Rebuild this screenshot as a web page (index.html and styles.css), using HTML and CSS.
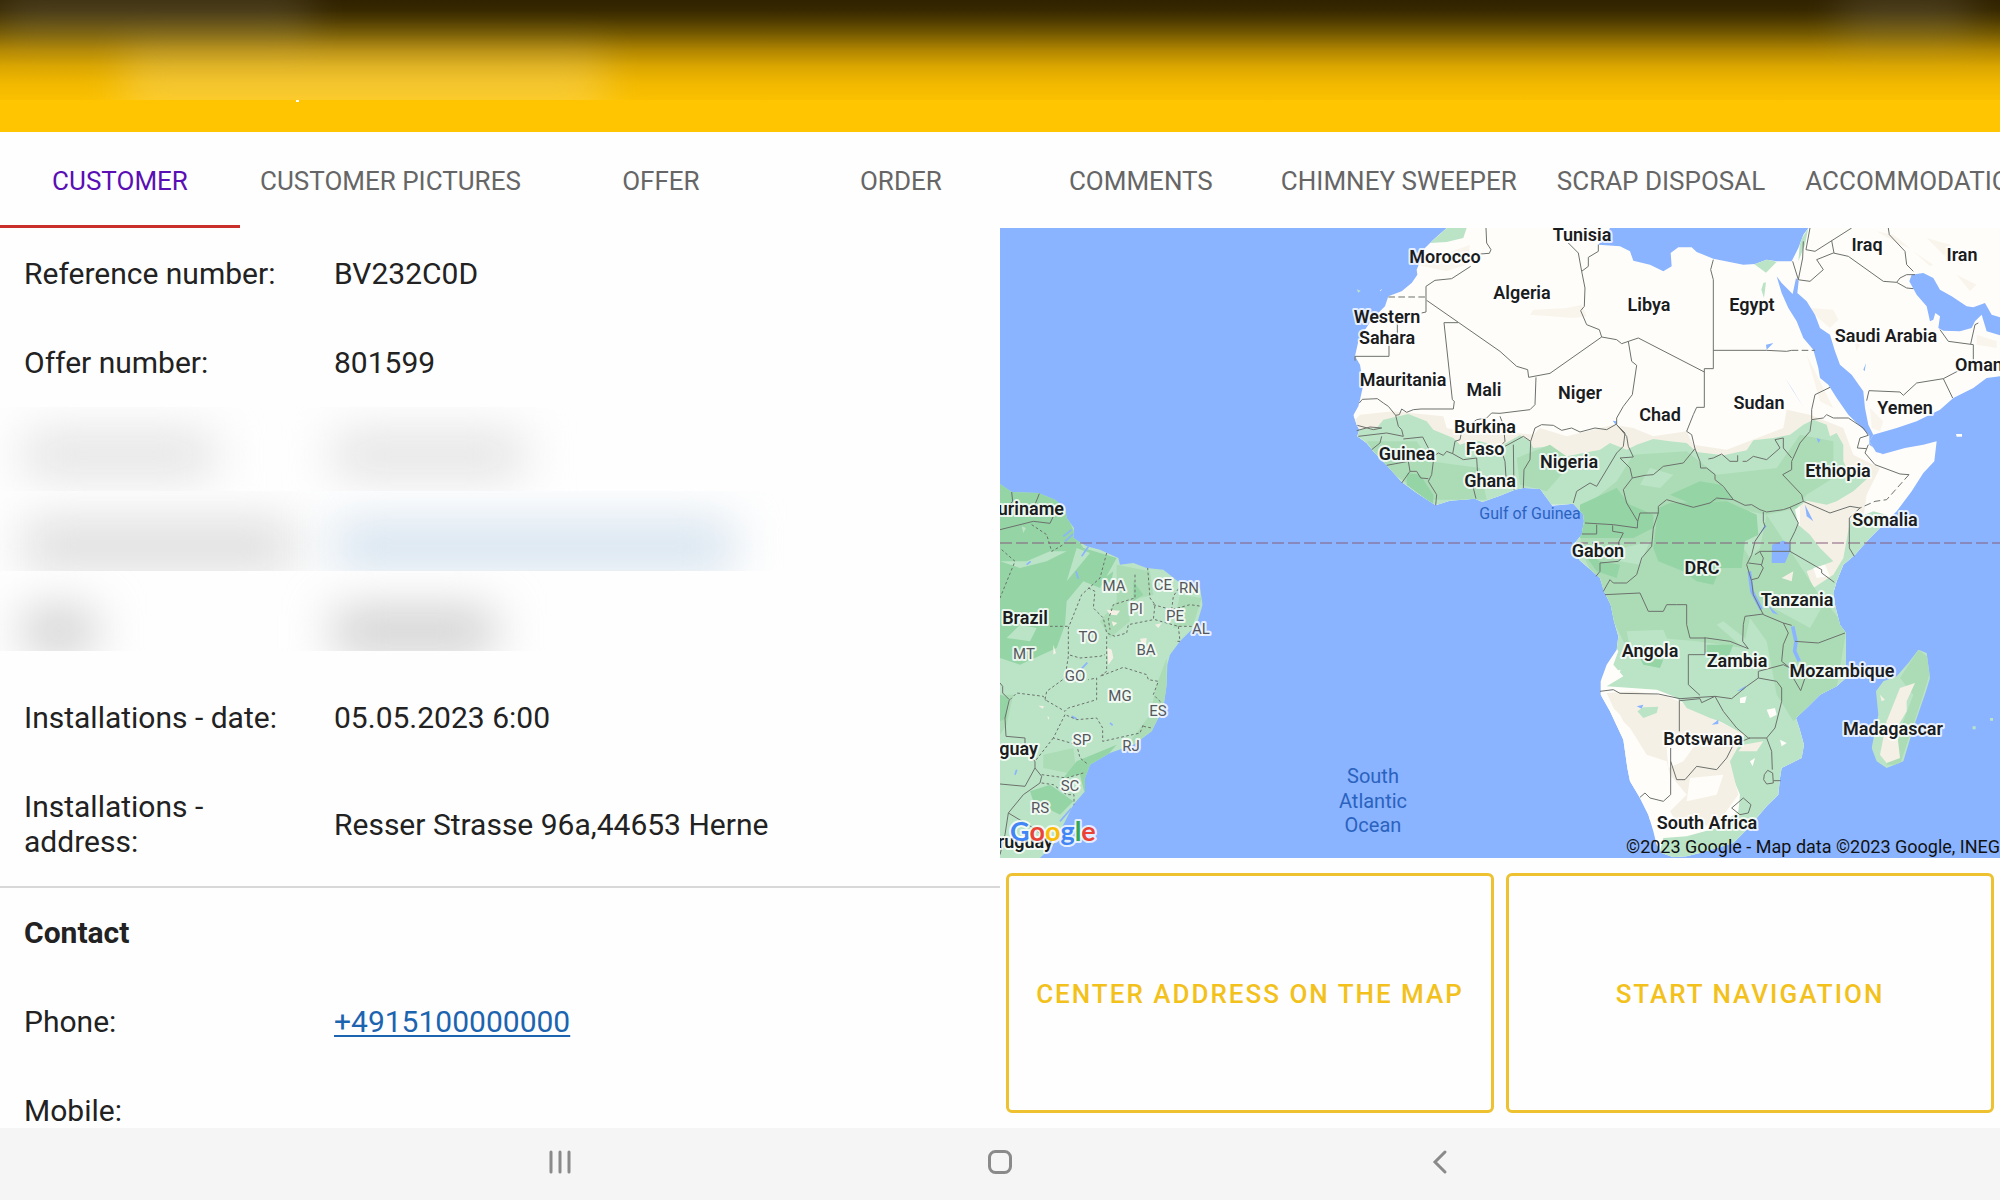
FILE: index.html
```html
<!DOCTYPE html>
<html lang="en">
<head>
<meta charset="utf-8">
<meta name="viewport" content="width=device-width, initial-scale=1">
<title>Customer</title>
<link rel="stylesheet" href="styles.css">
</head>
<body>
<header class="topbar">
  <div class="topbar-shade">
    <span class="glow glow-status"></span>
    <span class="glow glow-title"></span>
    <span class="glow glow-battery"></span>
  </div>
  <span class="title-tail"></span>
</header>

<nav class="tabs" role="tablist">
  <button class="tab tab-active" role="tab" aria-selected="true">CUSTOMER</button>
  <button class="tab" role="tab">CUSTOMER PICTURES</button>
  <button class="tab" role="tab">OFFER</button>
  <button class="tab" role="tab">ORDER</button>
  <button class="tab" role="tab">COMMENTS</button>
  <button class="tab" role="tab">CHIMNEY SWEEPER</button>
  <button class="tab" role="tab">SCRAP DISPOSAL</button>
  <button class="tab" role="tab">ACCOMMODATION</button>
</nav>

<main class="content">
  <section class="details">
    <dl class="rows">
      <div class="row"><dt>Reference number:</dt><dd>BV232C0D</dd></div>
      <div class="row"><dt>Offer number:</dt><dd>801599</dd></div>
    </dl>
    <div class="hidden-rows" aria-hidden="true">
      <div class="hidden-row hidden-name"><span class="smudge"></span><span class="smudge"></span></div>
      <div class="hidden-row hidden-mail"><span class="smudge"></span><span class="smudge smudge-link"></span></div>
      <div class="hidden-row hidden-type"><span class="smudge"></span><span class="smudge"></span></div>
    </div>
    <dl class="rows">
      <div class="row"><dt>Installations - date:</dt><dd>05.05.2023 6:00</dd></div>
      <div class="row"><dt>Installations - address:</dt><dd>Resser Strasse 96a,44653 Herne</dd></div>
    </dl>
    <h2 class="section-title">Contact</h2>
    <dl class="rows">
      <div class="row"><dt>Phone:</dt><dd><a class="phone" href="tel:+4915100000000">+4915100000000</a></dd></div>
      <div class="row"><dt>Mobile:</dt><dd></dd></div>
    </dl>
  </section>

  <section class="side">
    <svg class="map" viewBox="0 0 1000 630" preserveAspectRatio="xMidYMid slice" role="img" aria-label="Map">
      <defs>
        <clipPath id="land"><path d="M1340 0 1300 35 1275 60 1262 95 1250 125 1252 140 1235 165 1205 190 1165 205 1155 235 1115 275 1095 305 1075 340 1065 385 1080 410 1085 440 1090 470 1080 515 1075 535 1060 562 1070 590 1078 605 1072 625 1100 645 1120 670 1160 712 1205 762 1250 795 1307 832 1350 818 1425 812 1447 822 1500 803 1545 785 1570 780 1620 782 1640 810 1657 833 1720 827 1750 860 1752 880 1745 920 1720 950 1738 996 1800 1050 1812 1090 1832 1130 1842 1180 1855 1225 1850 1265 1820 1310 1802 1360 1802 1400 1830 1450 1870 1535 1882 1620 1890 1660 1920 1710 1945 1760 1960 1810 1970 1850 1985 1875 2020 1888 2060 1885 2100 1875 2200 1845 2245 1800 2300 1735 2335 1700 2340 1650 2345 1620 2405 1590 2412 1550 2398 1500 2388 1470 2420 1440 2460 1400 2510 1375 2538 1350 2538 1215 2520 1190 2505 1130 2500 1095 2510 1060 2530 1010 2565 980 2605 935 2640 900 2690 850 2735 790 2770 735 2803 700 2810 640 2770 650 2715 660 2650 678 2628 672 2608 640 2620 620 2690 600 2750 580 2820 545 2860 510 2920 480 2960 450 3000 445V0H2425L2410 20 2395 60 2375 100 2330 100 2300 95 2265 108 2230 110 2140 92 2090 72 2075 58 2035 58 2012 75 2015 115 1990 130 1950 110 1900 98 1890 70 1860 55 1795 50 1815 25 1830 0Z"/></clipPath>
        <clipPath id="america"><path d="M0 768 35 792 115 795 165 815 195 840 200 870 222 900 220 930 260 955 300 965 355 990 360 1010 400 1005 440 1020 490 1025 540 1065 600 1080 608 1130 590 1190 540 1240 510 1280 502 1310 500 1370 490 1440 455 1510 400 1550 330 1575 270 1610 255 1650 255 1690 220 1730 190 1790 160 1850 120 1890H0Z"/></clipPath>
        <clipPath id="madagascar"><path d="M2755 1265 2780 1275 2790 1350 2778 1390 2740 1500 2710 1600 2660 1620 2630 1600 2615 1560 2635 1460 2628 1390 2650 1360 2690 1345 2725 1305Z"/></clipPath>
      </defs>
      <rect class="sea" width="1000" height="630"/>
      <g transform="scale(.33333)">
        <g clip-path="url(#land)">
          <rect class="sand" x="1000" width="2000" height="1890"/>
          <path class="cream" d="M1050 590 1080 560 1180 550 1330 565 1340 600 1430 620 1500 610 1600 620 1620 600 1700 625 1840 590 1900 600 1960 625 2060 610 2080 650 2180 665 2350 600 2360 545 2430 560 2530 600 2560 680 2640 720 2600 800 2560 1080 2400 1100V760L1700 720 1100 680Z"/>
          <path class="cream soft" d="M1700 240 1745 230 1760 265 1720 270 1590 260 1600 245ZM2430 240 2500 245 2515 275 2490 300 2455 270ZM1250 110 1330 80 1410 50 1400 110 1340 130ZM2630 10 2680 20 2730 60 2700 50ZM2740 70 2800 110 2790 115ZM2780 30 2850 50 2890 110 2830 80ZM2870 140 2930 170 2910 190ZM2610 540 2650 580 2640 610 2615 600ZM2930 320 2990 340 2990 360 2930 350ZM2420 380 2450 440 2500 540 2460 520ZM2560 330 2580 350 2570 370Z"/>
          <path class="green" d="M1290 45 1340 0H1400L1390 30 1340 42ZM2262 108 2300 92 2330 102 2298 134ZM2290 165 2298 163 2292 210 2284 185ZM2395 100 2400 40 2425 0 2415 50Z"/>
          <path class="green" d="M1050 605 1130 600 1150 575 1225 558 1280 580 1300 605 1360 630 1380 650 1420 635 1500 655 1560 622 1590 640 1600 660 1650 655 1700 685 1800 665 1830 645 1880 665 1910 650 1960 633 2010 640 2060 645 2090 672 2170 682 2240 667 2260 637 2320 630 2370 620 2410 590 2440 575 2480 590 2490 625 2510 615 2530 650 2530 700 2545 730 2610 745 2560 790 2510 820 2480 830 2420 818 2385 845 2395 890 2430 920 2460 960 2500 1000 2420 1030 2440 1080 2500 1040 2530 990 2550 880 2620 850 2660 860 2700 1000 2700 1890H1975L1990 1830 2060 1825 2150 1800 2215 1750 2220 1700 2195 1640 2160 1610 2230 1520 2160 1480 2110 1450 2060 1430 2020 1405 1970 1385 1820 1375 1870 1345 1840 1310 1855 1270 1700 1000V830H1300L1050 660Z"/>
          <path class="cream" d="M1820 1395 1900 1390 2000 1405 2060 1430 2150 1475 2235 1520 2190 1600 2215 1700 2150 1790 2040 1800 2010 1750 2060 1700 2010 1640 2000 1600 1940 1580 1890 1500 1850 1460Z"/>
          <path class="green" d="M1912 1450 1930 1438 1975 1436 1970 1455 1930 1470ZM2045 1418 2110 1425 2170 1455 2190 1490 2130 1470 2060 1440Z"/>
          <path class="mid" d="M1100 640 1250 640 1290 700 1440 720 1460 815H1300L1150 720ZM1550 690 1650 650 1720 700 1640 790 1560 770ZM1900 680 2060 670 2150 740 2330 720 2400 620 2500 640 2500 750 2420 800 2390 840 2300 860 2450 1090 2540 1200 2510 1380 2380 1480 2330 1400 2300 1240 2250 1170 2230 1260 2090 1240 1980 1230 1890 1280 1850 1200 1740 960 1750 840 1850 760Z"/>
          <path class="light" d="M1950 720 2020 740 1980 780 1920 770ZM2140 830 2300 860 2280 960 2250 990 2180 880ZM2400 1100 2470 1130 2430 1200 2320 1140ZM1880 1210 1990 1205 2030 1300 1900 1310ZM2170 1180 2260 1250 2230 1260 2150 1190ZM1870 960 1950 940 1920 1010 1860 1000Z"/>
          <path class="dark" d="M1740 830 1850 780 1890 830 1960 860 1960 900 1900 930 1740 930ZM1975 840 2010 825 2180 820 2270 860 2275 920 2235 940 2225 1020 2160 1020 2140 1070 2090 1060 2050 1030 1975 1000 1960 960ZM1220 735 1260 740 1300 800 1300 830 1220 770ZM1740 960 1800 1000 1860 1010 1850 1050 1790 1030ZM2120 1250 2200 1250 2180 1300 2120 1290ZM1920 1290 1990 1295 1980 1320 1930 1310ZM2100 760 2160 770 2200 810 2080 830 2010 800Z"/>
          <path class="sand" d="M2100 1530 2050 1600 2005 1620 2000 1560 2040 1540ZM2070 1650 2170 1640 2150 1700 2060 1720ZM2300 1445 2325 1440 2330 1460 2310 1470ZM2220 1410 2240 1405 2235 1425 2220 1425ZM2440 1020 2475 1010 2490 1045 2450 1050ZM1845 1330 1862 1325 1855 1345ZM2250 1600 2265 1590 2258 1615ZM2340 1535 2360 1545 2345 1555ZM1800 1400 1860 1460 1900 1540 1980 1640 1990 1740 1950 1780 1850 1600Z"/>
          <path class="cream" d="M2345 1050 2380 1030 2375 1060ZM2230 1550 2290 1540 2270 1570 2215 1570Z"/>
          <path class="sea" d="M2330 145 2345 165 2378 198 2388 150 2396 160 2392 195 2420 220 2445 260 2460 300 2490 320 2505 370 2520 410 2555 440 2590 490 2595 540 2605 590 2620 620 2650 680 2608 650 2608 622 2580 595 2545 560 2510 510 2485 470 2460 450 2455 420 2440 365 2410 330 2390 280 2365 240 2345 195ZM2735 140 2770 135 2800 150 2820 185 2855 205 2900 235 2920 238 2955 225 2975 260 3000 268V322L2960 310 2945 260 2925 280 2915 300 2880 310 2830 308 2815 300 2820 265 2806 255 2800 275 2790 280 2780 235 2750 200 2728 160Z"/>
          <path class="sea" d="M2315 1005 2316 950 2350 938 2368 945 2370 970 2355 1005ZM2415 830 2440 880 2420 865ZM2295 890 2300 895 2275 925ZM2298 350 2320 345 2300 365ZM2355 450 2412 540 2375 480ZM1910 1435 1930 1430 1925 1442ZM2135 1490 2155 1475 2155 1488ZM2210 1390 2240 1372 2230 1385ZM1838 578 1850 580 1848 592ZM2590 425 2598 405 2594 430ZM2450 630 2462 635 2455 645ZM2303 1130 2335 1160 2318 1155Z"/>
          <path class="lake" d="M2248 1030 2256 1090 2284 1145M2378 1195 2388 1240 2384 1270 2398 1300"/>
        </g>
        <path class="sand" d="M1140 188 1146 182 1142 190ZM2868 618H2886V626H2870Z"/>
        <path class="green" d="M1070 184 1082 188 1075 194ZM2918 1495H2927V1504H2918ZM2970 1470H2979V1478H2970Z"/>

        <g clip-path="url(#madagascar)">
          <rect class="green" x="2600" y="1250" width="200" height="400"/>
          <path class="mid" d="M2755 1265 2800 1300 2770 1400 2700 1610 2660 1610 2740 1400 2700 1350Z"/>
          <path class="cream" d="M2745 1365 2720 1420 2720 1450 2690 1500 2700 1590 2660 1605 2640 1580 2660 1480 2700 1380ZM2640 1400 2655 1415 2645 1420Z"/>
        </g>

        <g clip-path="url(#america)">
          <rect class="green" y="760" width="620" height="1140"/>
          <path class="dark" d="M0 760H160L230 930 250 960 350 990 300 1080 250 1060 200 1120 195 1190 170 1260 60 1310 0 1290Z"/>
          <path class="light" d="M60 1190 110 1200 90 1240 20 1230ZM0 1000 80 1000 150 970 200 970 140 1000 60 1020ZM65 895 78 900 70 915ZM230 960 270 975 200 1060Z"/>
          <path class="mid" d="M350 1010 450 1030 460 1100 380 1120 390 1180 330 1230 300 1180 350 1120ZM500 1290 500 1400 460 1520 420 1560 390 1540 450 1460 470 1370ZM130 1580 220 1560 230 1640 130 1620ZM0 1400 40 1400 20 1490 0 1520ZM540 1100 605 1110 580 1190 520 1200Z"/>
          <path class="dark" d="M230 1600 350 1550 270 1640 255 1700 240 1640 190 1650ZM90 1690 150 1670 220 1720 180 1760 100 1720ZM0 1400 25 1410 20 1470 0 1480ZM300 1060 340 1030 330 1080ZM400 1060 430 1100 400 1120Z"/>
          <path class="cream" d="M320 1145 360 1148 350 1162 330 1160ZM335 1180 352 1185 340 1195ZM465 1190 485 1185 475 1200ZM322 1260 335 1265 340 1290 325 1310ZM420 1232 440 1230 438 1250 425 1248ZM115 1433 132 1434 128 1442ZM160 1250 168 1275 160 1280ZM142 1465 148 1468 145 1476Z"/>
          <path class="water" d="M190 925 215 905M195 940 220 918M245 985 268 952M245 1322 262 1304M215 1465 230 1472M330 1485 338 1492M80 1010 92 1000M180 1780 215 1740M228 1030 235 1052M45 1640 50 1625"/>
        </g>

        <path class="border" d="M1458 0 1460 45 1473 65 1468 76 1440 78M1412 115 1355 152 1305 157 1278 175V252L1265 255M1280 217 1375 283 1500 370 1550 415 1583 425 1586 448 1650 436 1805 327 1850 335 1865 347 1915 330 2113 432M1375 284H1332L1357 515 1363 520 1360 543H1263L1240 545 1220 553 1205 543 1198 560 1187 562 1165 535 1150 525 1132 512 1087 514 1078 525M1065 398V385H1167V320H1192V285M1187 562 1195 595 1205 605 1210 625 1160 615 1075 625M1070 608 1110 597 1145 600 1120 605 1072 592M1210 633 1268 627 1285 660 1300 700 1295 740 1285 760 1310 800 1307 832M1145 625 1140 645 1115 665M1160 712 1225 700 1230 730 1205 765M1230 730H1250L1262 750 1285 752M1300 685 1315 675 1330 682 1340 670 1358 677 1365 640 1380 635 1385 610 1430 575 1460 570 1475 555 1500 556 1590 545 1605 530 1608 448M1358 677 1390 695 1430 690 1433 740 1420 780 1428 812M1500 565 1510 590 1515 640 1500 655 1515 700 1520 780M1515 655 1570 625 1592 640M1540 650 1542 785M1570 780 1572 725 1590 695 1592 640 1605 600 1625 590 1660 592 1685 607 1715 600 1740 612 1785 600 1820 605 1850 588M1885 340 1895 400 1910 412 1897 500 1870 535 1850 570V590L1875 615 1870 655 1850 675 1790 775 1770 765 1730 790 1720 825M1850 590 1880 625 1885 655 1900 687 1860 690 1890 720 1897 750 1870 785 1880 825 1913 880 1912 900 1840 890 1755 885M1897 750 1935 742 1960 740 1990 715 2050 705 2085 662M1913 880 1920 855 1975 855V835L2000 815 2080 838 2130 825 2150 810 2200 815 2185 795 2170 775 2145 755V740L2120 720H2102L2100 700 2085 662 2075 620 2060 610 2080 560 2090 538H2113V422H2140V155L2132 125 2140 95M2140 367H2300L2360 370 2375 367M1705 45 1735 75 1745 130 1755 180 1753 235 1742 248 1760 290 1798 305 1805 327M1745 130 1765 115V88L1795 70V50M2125 693 2140 690 2165 678 2190 700H2213V682M2228 700 2240 700 2260 685 2300 695 2340 660 2325 635 2350 630V660L2375 690M2490 478 2445 500 2435 545V575L2430 610 2400 645 2375 700V725L2348 740 2405 800 2410 820 2370 838 2350 845 2300 852 2280 845 2255 830 2235 832 2200 815M2435 575 2470 570 2480 560 2500 570 2545 570 2590 600 2605 622 2580 630 2572 660 2600 662M2605 650 2595 675 2625 710 2700 738 2727 740M2410 820 2490 855 2550 835 2580 840 2548 870V960L2563 985M2370 838 2395 885 2385 910 2370 940V970H2280L2265 980M2370 970 2465 1025V1035L2503 1063M2290 852V880L2295 895 2265 940 2255 980 2240 1010 2255 1060 2260 1100 2290 1160 2350 1185 2375 1192M2245 1005 2285 1010 2290 990 2280 972M2255 1055 2275 1050 2290 1020 2283 1010M2290 1158 2235 1165 2230 1190 2228 1240 2245 1262 2190 1240 2120 1230 2070 1230 2060 1190V1130H2030L2000 1130 1990 1150 1945 1150 1920 1095 1815 1100M2115 1228V1280H2065V1370L2100 1402M1800 1390 1840 1385 1860 1396 1975 1398 2040 1412 2145 1405 2195 1412 2240 1375 2275 1350 2330 1360 2345 1380V1420L2325 1500 2300 1530 2245 1530 2210 1500 2170 1450 2145 1405M2038 1415V1510M2040 1418 2100 1412 2105 1424 2145 1405M2275 1350V1330L2350 1310 2370 1320M2350 1185 2365 1215 2350 1250 2345 1300 2370 1320M2380 1350 2402 1388 2415 1350M2385 1240 2455 1245 2535 1215M2012 1560V1700L1990 1720 1950 1710 1935 1695 1920 1708M2012 1600 2030 1655H2055L2090 1615 2150 1625 2180 1590 2200 1550 2250 1530M2300 1530 2315 1570 2317 1625M2293 1640 2303 1627 2318 1635 2320 1665 2300 1668 2291 1655ZM2320 1658H2342M2195 1740 2230 1710 2253 1730 2245 1755 2220 1760ZM1745 918H1790V890M1838 892V910L1870 915 1855 945 1870 985 1855 1000 1800 1005V1030L1788 1045M1975 855 1960 900 1955 955 1925 990 1910 1040 1880 1065 1840 1065 1830 1055 1810 1090M2393 155 2430 160 2470 125 2450 95 2500 75 2545 85 2650 160 2690 163 2700 150 2720 140H2745M2430 0 2418 65 2445 70 2555 0M2495 38 2502 75M2410 40 2408 90 2395 155 2378 100M2665 0 2668 20 2715 70 2720 110 2740 130M2690 163 2720 180 2740 182M2600 518 2607 488 2700 492 2710 502 2750 465 2830 452 2858 510M2830 452 2920 405V350L2845 340 2820 305M2912 348 2925 290 2935 285"/>
        <path class="border" d="M35 792 38 820 20 840M118 797 105 830 110 850M0 905 100 880 150 886 160 865M0 1365 8 1375V1395L28 1415 15 1470 18 1525 75 1530V1570L105 1600V1620L75 1675 0 1668M105 1620 125 1645 120 1665 70 1700 25 1755 15 1820 0 1880M25 1755 100 1800 160 1850"/>
        <path class="border dashed" d="M1165 207H1278M2375 367H2445M2727 740 2660 815 2625 820 2580 840"/>
        <path class="border state" d="M5 965 45 1000 0 1110M95 890 140 920 155 970 190 950M320 975 300 1050 245 1100 205 1200 205 1280 240 1290 300 1285 315 1280M150 1195H205M205 1285 195 1350 140 1390 135 1415 195 1450 205 1440 290 1415V1350L265 1355M265 1080 285 1090 280 1140 310 1170 320 1215 345 1225 380 1215 385 1190 460 1175 465 1130 450 1110 443 1020M405 1040 405 1110 340 1130 325 1175 330 1205M460 1130 515 1145 570 1130 605 1135M515 1145 520 1105 540 1075M465 1175 535 1195 580 1195M535 1195 540 1240 525 1240M320 1225 320 1330 300 1345 370 1318 440 1340 445 1355 475 1360 460 1400 490 1430M430 1495 455 1500M195 1460 160 1530 230 1550 240 1590 265 1610M160 1530 105 1600M200 1462 230 1475 290 1470 308 1500V1540L420 1515 430 1490M30 1415 50 1395 130 1405 138 1418M125 1640 200 1650 250 1635M125 1665 160 1670 200 1700 222 1700V1730"/>
      </g>
      <path class="equator" d="M0 315H1000"/>

      <g class="country">
        <text x="445" y="35">Morocco</text><text x="387" y="95">Western</text><text x="387" y="116">Sahara</text>
        <text x="403" y="158">Mauritania</text><text x="484" y="168">Mali</text><text x="485" y="205">Burkina</text><text x="485" y="227">Faso</text>
        <text x="407" y="232">Guinea</text><text x="490" y="259">Ghana</text><text x="522" y="71">Algeria</text><text x="582" y="13">Tunisia</text>
        <text x="649" y="83">Libya</text><text x="752" y="83">Egypt</text><text x="867" y="23">Iraq</text><text x="962" y="33">Iran</text>
        <text x="886" y="114">Saudi Arabia</text><text x="979" y="143">Oman</text><text x="580" y="171">Niger</text><text x="660" y="193">Chad</text>
        <text x="759" y="181">Sudan</text><text x="905" y="186">Yemen</text><text x="569" y="240">Nigeria</text><text x="838" y="249">Ethiopia</text>
        <text x="885" y="298">Somalia</text><text x="598" y="329">Gabon</text><text x="702" y="346">DRC</text><text x="797" y="378">Tanzania</text>
        <text x="650" y="429">Angola</text><text x="737" y="439">Zambia</text><text x="842" y="449">Mozambique</text><text x="893" y="507">Madagascar</text>
        <text x="703" y="517">Botswana</text><text x="707" y="601">South Africa</text><text x="25" y="396">Brazil</text>
        <text class="end" x="64" y="287">Suriname</text><text class="end" x="38" y="527">Paraguay</text><text class="end" x="53" y="620">Uruguay</text>
      </g>
      <g class="region">
        <text x="114" y="363">MA</text><text x="163" y="362">CE</text><text x="189" y="365">RN</text><text x="136" y="386">PI</text>
        <text x="175" y="393">PE</text><text x="201" y="406">AL</text><text x="88" y="414">TO</text><text x="146" y="427">BA</text>
        <text x="24" y="431">MT</text><text x="75" y="453">GO</text><text x="120" y="473">MG</text><text x="158" y="488">ES</text>
        <text x="82" y="517">SP</text><text x="131" y="523">RJ</text><text x="70" y="563">SC</text><text x="40" y="585">RS</text>
      </g>
      <g class="ocean">
        <text class="gulf" x="530" y="291">Gulf of Guinea</text>
        <text x="373" y="555">South</text><text x="373" y="580">Atlantic</text><text x="373" y="604">Ocean</text>
      </g>
      <text class="logo" x="10" y="613"><tspan class="g-blue">G</tspan><tspan class="g-red">o</tspan><tspan class="g-yellow">o</tspan><tspan class="g-blue">g</tspan><tspan class="g-green">l</tspan><tspan class="g-red">e</tspan></text>
      <text class="credit" x="626" y="625">©2023 Google - Map data ©2023 Google, INEGI</text>
    </svg>
    <div class="actions">
      <button class="action">CENTER ADDRESS ON THE MAP</button>
      <button class="action">START NAVIGATION</button>
    </div>
  </section>
</main>

<footer class="navbar">
  <button class="nav-key" aria-label="Recent apps"><svg viewBox="0 0 28 28"><path d="M5 4V24M14 4V24M23 4V24"/></svg></button>
  <button class="nav-key" aria-label="Home"><svg viewBox="0 0 28 28"><rect x="3.500" y="3.500" width="21" height="21" rx="6"/></svg></button>
  <button class="nav-key" aria-label="Back"><svg viewBox="0 0 28 28"><path d="M19 4 9 14 19 24"/></svg></button>
</footer>
</body>
</html>
```
FILE: styles.css
```css
* { box-sizing: border-box; }

body {
  margin: 0;
  height: 100vh;
  display: flex;
  flex-direction: column;
  overflow: hidden;
  background: #fefefe;
  color: #222;
  font-family: Roboto, "Liberation Sans", sans-serif;
}

button {
  margin: 0;
  border: 0;
  background: none;
  font-family: inherit;
}

/* Top bar */
.topbar {
  position: relative;
  flex: none;
  padding-bottom: 32px;
  background: #ffc500;
}

.topbar-shade {
  position: relative;
  height: 100px;
  overflow: hidden;
  background: linear-gradient(#302200 0, #372800 10px, #4d3a00 20px, #735800 33px, #b08500 50px, #d9a500 66px, #f0b700 82px, #fac000 100px);
}

.glow {
  position: absolute;
  background: #fff;
  filter: blur(20px);
}

.glow-status { left: 0; top: -10px; width: 310px; height: 50px; opacity: .12; }
.glow-title { left: 124px; top: 50px; width: 480px; height: 80px; opacity: .18; }
.glow-battery { right: 30px; top: -10px; width: 130px; height: 50px; opacity: .12; }

.title-tail {
  position: absolute;
  left: 296px;
  top: 100px;
  width: 3px;
  height: 2px;
  background: #fff;
}

/* Tabs */
.tabs {
  flex: none;
  display: flex;
  height: 96px;
  overflow: hidden;
}

.tab {
  flex: none;
  min-width: 240px;
  padding: 4px 20px 0;
  border-bottom: 3px solid transparent;
  color: #666;
  font-size: 26px;
  white-space: nowrap;
}

.tab-active {
  border-bottom-color: #c9302c;
  color: #5a0fb4;
}

/* Content */
.content {
  flex: 1;
  min-height: 0;
  display: grid;
  grid-template-columns: 1fr 1fr;
}

.details {
  min-height: 0;
  padding-top: 1px;
  overflow: hidden;
  font-size: 30px;
  line-height: 35px;
}

.rows { margin: 0; }

.row {
  display: grid;
  grid-template-columns: 286px 1fr;
  column-gap: 24px;
  align-items: center;
  padding: 27px 24px;
}

.row dt { padding-right: 24px; }
.row dd { margin: 0; }

.section-title {
  margin: 0;
  padding: 27px 24px;
  border-top: 2px solid #d8d8d8;
  font-size: 30px;
  font-weight: 700;
}

.phone {
  color: #1c64b0;
  text-decoration-thickness: 2px;
  text-underline-offset: 3px;
}

/* Smudged private rows */
.hidden-rows { padding-bottom: 22px; }

.hidden-row {
  display: grid;
  grid-template-columns: 310px 1fr;
  align-items: end;
  height: 80px;
  padding: 0 24px;
  overflow: hidden;
}

.smudge {
  height: 40px;
  background: #dcdcdc;
  filter: blur(24px);
}

.smudge-link { background: #d4e2ee; }
.hidden-name { height: 84px; padding-bottom: 16px; }
.hidden-name .smudge { width: 190px; background: #dfdfdf; }
.hidden-mail .smudge { width: 270px; height: 50px; }
.hidden-mail .smudge-link { width: 400px; }
.hidden-type .smudge { width: 70px; background: #c8c8c8; }
.hidden-type .smudge + .smudge { width: 160px; }

/* Map and actions */
.side {
  min-height: 0;
  display: grid;
  grid-template-rows: 7fr 3fr;
}

.map {
  display: block;
  width: 100%;
  height: 100%;
  min-height: 0;
  overflow: hidden;
}

.sea { fill: #8ab4ff; }
.sand { fill: #fffdf9; }
.cream { fill: #f5f0e5; }
.soft { opacity: .6; }
.green { fill: #bbe4c6; }
.light { fill: #bbe4c6; }
.mid { fill: #acdcb6; }
.dark { fill: #94d4a5; }
.lake { fill: none; stroke: #8ab4ff; stroke-width: 11; }
.water { fill: none; stroke: #8ab4ff; stroke-width: 5; }
.border { fill: none; stroke: #6b706c; stroke-width: 3; stroke-linejoin: round; }
.dashed { stroke-dasharray: 20 10; }
.state { stroke-dasharray: 8 7; }
.equator { fill: none; stroke: #855c7c; stroke-width: 1; stroke-dasharray: 12 4; }

.country text,
.region text,
.logo {
  paint-order: stroke;
  stroke: #fff;
  stroke-opacity: .8;
  stroke-width: 4px;
  stroke-linejoin: round;
}

.country text { font-size: 18px; font-weight: 600; fill: #1a1c1e; text-anchor: middle; }
.country .end { text-anchor: end; }
.region text { font-size: 15px; fill: #54585c; text-anchor: middle; }
.ocean text { font-size: 20px; fill: #2b62be; text-anchor: middle; }
.ocean .gulf { font-size: 16px; }
.logo { font-family: Lato, Roboto, sans-serif; font-size: 27px; font-weight: 700; }
.g-blue { fill: #4285f4; }
.g-red { fill: #ea4335; }
.g-yellow { fill: #fbbc05; }
.g-green { fill: #34a853; }
.credit { font-size: 18px; fill: #111; }

.actions {
  display: grid;
  grid-template-columns: 1fr 1fr;
  gap: 12px;
  padding: 15px 6px;
}

.action {
  padding: 2px 6px 0;
  border: 3px solid #edc12f;
  border-radius: 6px;
  color: #f3c11b;
  font-size: 26px;
  font-weight: 500;
  letter-spacing: 2px;
}

/* System navigation */
.navbar {
  flex: none;
  display: flex;
  align-items: center;
  justify-content: space-evenly;
  height: 72px;
  padding: 0 134px 4px;
  background: #f5f5f5;
}

.nav-key { padding: 0; line-height: 0; }

.nav-key svg {
  width: 28px;
  height: 28px;
  fill: none;
  stroke: #8a8a8a;
  stroke-width: 3;
  stroke-linecap: round;
}
```
